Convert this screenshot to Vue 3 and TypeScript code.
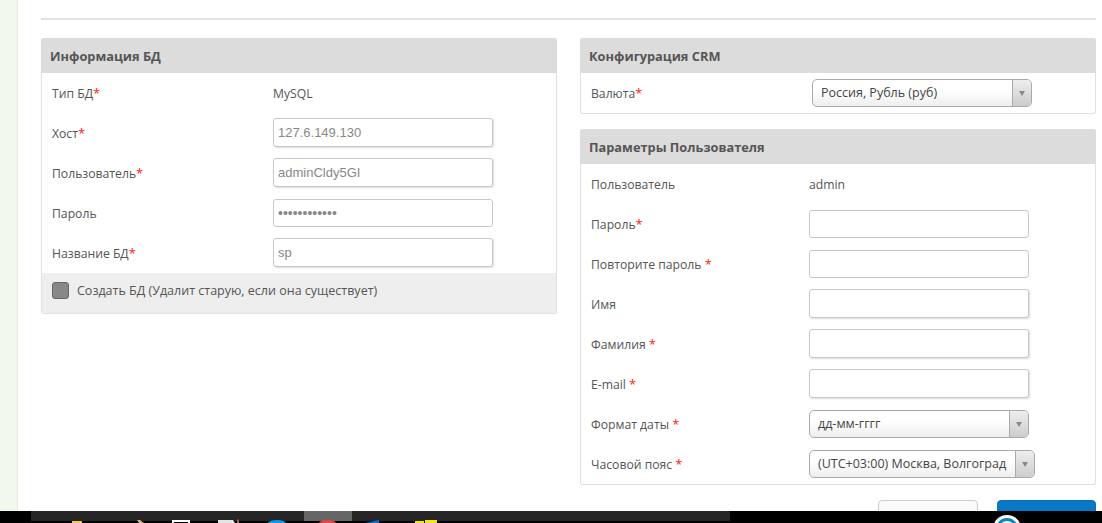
<script setup lang="ts">
interface Row {
  label: string
  req?: boolean
  gap?: boolean
  text?: string
  input?: string
  select?: string
  dots?: boolean
  shadow?: boolean
  wide?: boolean
}

const dbRows: Row[] = [
  { label: 'Тип БД', req: true, text: 'MySQL' },
  { label: 'Хост', req: true, input: '127.6.149.130', shadow: true },
  { label: 'Пользователь', req: true, input: 'adminCldy5GI', shadow: true },
  { label: 'Пароль', input: '••••••••••••', dots: true },
  { label: 'Название БД', req: true, input: 'sp', shadow: true },
]

const userRows: Row[] = [
  { label: 'Пользователь', text: 'admin' },
  { label: 'Пароль', req: true, input: '' },
  { label: 'Повторите пароль', req: true, gap: true, input: '' },
  { label: 'Имя', input: '', shadow: true },
  { label: 'Фамилия', req: true, gap: true, input: '', shadow: true },
  { label: 'E-mail', req: true, gap: true, input: '', shadow: true },
  { label: 'Формат даты', req: true, gap: true, select: 'дд-мм-гггг' },
  { label: 'Часовой пояс', req: true, gap: true, select: '(UTC+03:00) Москва, Волгоград', wide: true },
]
</script>

<template>
  <div class="page">
    <div class="side"></div>
    <main class="content">
      <hr class="rule" />
      <div class="cols">
        <section class="panel db">
          <h3 class="head">Информация БД</h3>
          <div v-for="r in dbRows" :key="r.label" class="row">
            <span class="lab">{{ r.label }}<i v-if="r.req" class="star">*</i></span>
            <span v-if="r.text" class="val">{{ r.text }}</span>
            <div v-else class="field grey" :class="{ sh: r.shadow, dots: r.dots }">{{ r.input }}</div>
          </div>
          <div class="foot">
            <span class="check"></span>
            <span>Создать БД (Удалит старую, если она существует)</span>
          </div>
        </section>

        <div class="right">
          <section class="panel crm">
            <h3 class="head">Конфигурация CRM</h3>
            <div class="row">
              <span class="lab">Валюта<i class="star">*</i></span>
              <div class="sel">
                <span class="sel-text">Россия, Рубль (руб)</span>
                <span class="sel-btn"><b class="tri"></b></span>
              </div>
            </div>
          </section>

          <section class="panel user">
            <h3 class="head">Параметры Пользователя</h3>
            <div v-for="r in userRows" :key="r.label" class="row">
              <span class="lab">{{ r.label }}<template v-if="r.gap">&nbsp;</template><i v-if="r.req" class="star">*</i></span>
              <span v-if="r.text" class="val">{{ r.text }}</span>
              <div v-else-if="r.select" class="sel" :class="{ wide: r.wide }">
                <span class="sel-text">{{ r.select }}</span>
                <span class="sel-btn"><b class="tri"></b></span>
              </div>
              <div v-else class="field" :class="{ sh: r.shadow }"></div>
            </div>
          </section>

          <div class="actions">
            <button class="btn plain" type="button"></button>
            <button class="btn blue" type="button"></button>
          </div>
        </div>
      </div>
    </main>

    <footer class="taskbar">
      <div class="bar-strip">
        <div class="bar-active"></div>
      </div>
      <svg class="tray" width="1102" height="12" viewBox="0 511 1102 12">
        <rect x="72" y="521" width="10" height="2" fill="#f2c94c" />
        <path d="M137 520h3l4 3h-5z" fill="#d9b48a" />
        <path d="M173 523v-2h16v2" fill="none" stroke="#fff" stroke-width="2" />
        <path d="M218 520h15l2 3h-17z" fill="#e4e4e4" />
        <path d="M237 520l2-1v4h-2z" fill="#a55" />
        <path d="M268 523a9 3 0 0 1 18 0z" fill="#0a9ae8" />
        <path d="M319 523a8.500 3 0 0 1 17 0z" fill="#de4b3e" />
        <path d="M365 523l14-3v3z" fill="#0a6fd0" />
        <path d="M415 523v-2h9v2zM425 523v-3h12v3z" fill="#f5e313" />
        <circle cx="1007" cy="529" r="14" fill="#fff" />
        <circle cx="1007" cy="529" r="11" fill="#0a84c8" />
        <circle cx="1007" cy="529" r="8" fill="#fff" />
      </svg>
    </footer>
  </div>
</template>

<style>
html,
body {
  margin: 0;
  background: #fff;
  overflow: hidden;
}
</style>

<style scoped>
.page {
  display: flex;
  position: relative;
  width: 1102px;
  height: 523px;
  overflow: hidden;
  font-family: 'Open Sans', 'Liberation Sans', sans-serif;
  font-size: 12.2px;
  color: #555;
  background: #fff;
}

.side {
  flex: 0 0 17px;
  background: #f3f8ef;
  border-right: 1px solid #e8ebe4;
}

.content {
  flex: 1;
  padding: 18px 6px 0 23px;
  min-width: 0;
}

.rule {
  margin: 0;
  border: 0;
  height: 2px;
  background: #e3e3e3;
}

.cols {
  display: flex;
  justify-content: space-between;
  margin-top: 18px;
}

.panel {
  box-sizing: border-box;
  border: 1px solid #e0e0e0;
  border-top: 0;
  border-radius: 3px;
  background: #fff;
}

.db {
  width: 516px;
  height: 276px;
  align-self: flex-start;
}

.right {
  display: flex;
  flex-direction: column;
  width: 516px;
}

.crm {
  height: 76px;
}

.user {
  height: 356px;
  margin-top: 15px;
}

.head {
  margin: 0 -1px;
  height: 35px;
  padding: 0 9px;
  line-height: 36px;
  font-size: 12.8px;
  font-weight: 700;
  color: #555;
  background: #dcdcdc;
  border-radius: 3px 3px 0 0;
}

.row {
  display: flex;
  align-items: center;
  height: 40px;
  padding-left: 10px;
}

.lab {
  white-space: nowrap;
}

.star {
  font-style: normal;
  font-size: 13px;
  color: #ff2020;
}

.db .lab,
.crm .lab {
  flex: 0 0 221px;
}

.user .lab {
  flex: 0 0 218px;
}

.field {
  box-sizing: border-box;
  width: 220px;
  height: 28px;
  padding: 0 4px;
  line-height: 26px;
  border: 1px solid #c8c8c8;
  border-radius: 3px;
  background: #fff;
  font-family: 'Liberation Sans', Arial, sans-serif;
  font-size: 13px;
}

.sh {
  height: 29px;
  margin-bottom: 1px;
  line-height: 27px;
  box-shadow: 1px 1px 2px rgba(0, 0, 0, 0.14);
}

.grey {
  color: #888;
}

.dots {
  font-size: 14px;
}

.foot {
  display: flex;
  align-items: center;
  gap: 8px;
  height: 40px;
  padding: 0 0 5px 10px;
  box-sizing: border-box;
  background: #eee;
  font-size: 12.5px;
  border-radius: 0 0 3px 3px;
}

.check {
  box-sizing: border-box;
  width: 17px;
  height: 17px;
  border: 1px solid #666;
  border-radius: 3px;
  background: #888;
}

.sel {
  box-sizing: border-box;
  display: flex;
  width: 220px;
  height: 28px;
  border: 1px solid #aaa;
  border-radius: 5px;
  background: linear-gradient(#fff 40%, #eee);
  color: #444;
  font-size: 12.5px;
}

.wide {
  width: 226px;
}

.sel-text {
  flex: 1;
  padding-left: 8px;
  line-height: 26px;
  white-space: nowrap;
}

.sel-btn {
  display: flex;
  flex: 0 0 18px;
  align-items: center;
  justify-content: center;
  border-left: 1px solid #aaa;
  border-radius: 0 4px 4px 0;
  background: linear-gradient(#eee, #ccc);
}

.tri {
  width: 0;
  height: 0;
  border-left: 3px solid transparent;
  border-right: 3px solid transparent;
  border-top: 5px solid #888;
}

.actions {
  display: flex;
  justify-content: flex-end;
  gap: 19px;
  margin-top: 15px;
}

.btn {
  box-sizing: border-box;
  height: 40px;
  padding: 0;
  border-radius: 4px;
}

.plain {
  width: 100px;
  border: 1px solid #ccc;
  background: #fafafa;
}

.blue {
  width: 99px;
  border: 1px solid #0a6fb8;
  background: #0a78c8;
}

.taskbar {
  position: absolute;
  left: 0;
  right: 0;
  bottom: 0;
  height: 12px;
  background: #000;
}

.bar-strip {
  position: absolute;
  left: 31px;
  width: 699px;
  height: 10px;
  background: #262626;
}

.bar-active {
  position: absolute;
  left: 273px;
  width: 48px;
  height: 10px;
  background: #666;
}

.tray {
  position: absolute;
  left: 0;
  top: 0;
}
</style>
